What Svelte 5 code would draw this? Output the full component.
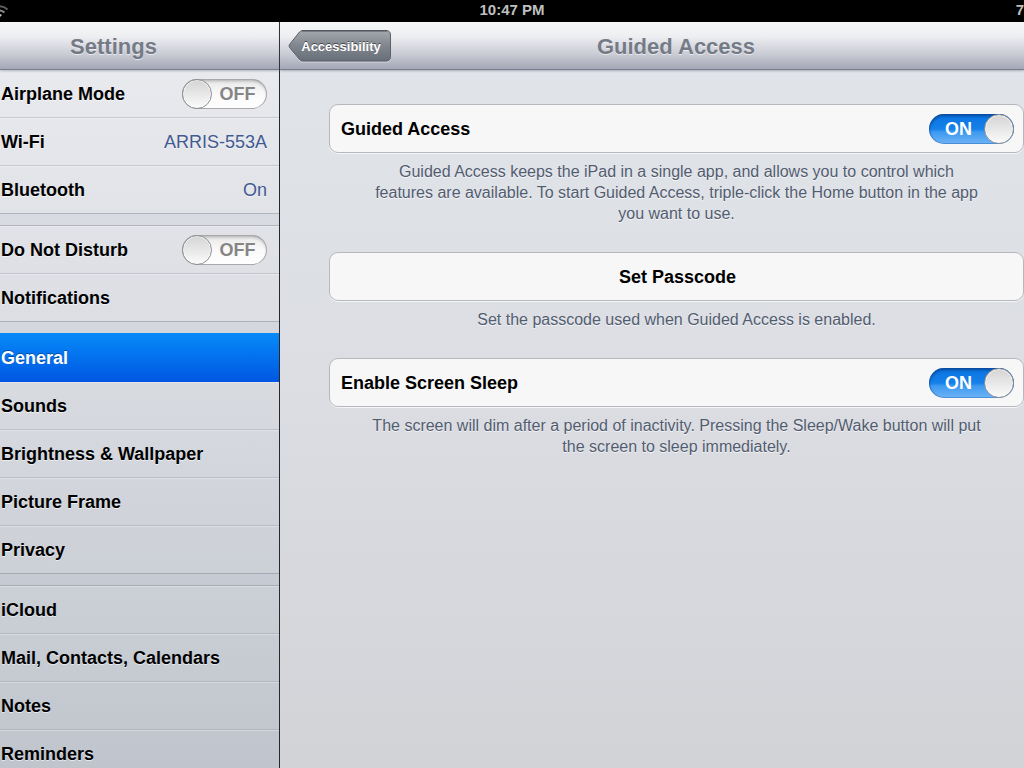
<script lang="ts">
  type Item = { id: string; label: string; value?: string; toggle?: boolean };

  let switches: Record<string, boolean> = $state({
    airplane: false,
    dnd: false,
    guided: true,
    sleep: true,
  });

  let selected = $state('general');

  const groups: Item[][] = [
    [
      { id: 'airplane', label: 'Airplane Mode', toggle: true },
      { id: 'wifi', label: 'Wi-Fi', value: 'ARRIS-553A' },
      { id: 'bluetooth', label: 'Bluetooth', value: 'On' },
    ],
    [
      { id: 'dnd', label: 'Do Not Disturb', toggle: true },
      { id: 'notifications', label: 'Notifications' },
    ],
    [
      { id: 'general', label: 'General' },
      { id: 'sounds', label: 'Sounds' },
      { id: 'brightness', label: 'Brightness & Wallpaper' },
      { id: 'frame', label: 'Picture Frame' },
      { id: 'privacy', label: 'Privacy' },
    ],
    [
      { id: 'icloud', label: 'iCloud' },
      { id: 'mail', label: 'Mail, Contacts, Calendars' },
      { id: 'notes', label: 'Notes' },
      { id: 'reminders', label: 'Reminders' },
    ],
  ];
</script>

{#snippet toggle(id: string)}
  <span class="switch" class:on={switches[id]}>
    <input type="checkbox" role="switch" {id} bind:checked={switches[id]} />
    <span class="switch-text" aria-hidden="true">{switches[id] ? 'ON' : 'OFF'}</span>
    <span class="knob"></span>
  </span>
{/snippet}

<div class="screen">
  <div class="status">
    <svg class="wifi" width="9" height="18" viewBox="0 0 9 18" aria-hidden="true">
      <g fill="none" stroke-width="2">
        <path d="M-9 7.5 A12 12 0 0 1 7.500 7.500" stroke="#5e5e5e" />
        <path d="M-6 10.500 A8 8 0 0 1 4.500 10.500" stroke="#8a8a8a" />
      </g>
      <path d="M-4 13 Q-1 10.500 2 13 L-1 16 Z" fill="#c4c4c4" />
    </svg>
    <span class="clock">10:47 PM</span>
    <span class="battery">7</span>
  </div>

  <div class="split">
    <aside class="sidebar">
      <header class="bar"><h1>Settings</h1></header>
      <nav class="list">
        {#each groups as group}
          <div class="group">
            {#each group as item (item.id)}
              {#if item.toggle}
                <div class="row">
                  <label for={item.id}>{item.label}</label>
                  {@render toggle(item.id)}
                </div>
              {:else}
                <a
                  class="row"
                  class:selected={selected === item.id}
                  href="#{item.id}"
                  onclick={() => (selected = item.id)}
                >
                  <span class="name">{item.label}</span>
                  {#if item.value}<span class="value">{item.value}</span>{/if}
                </a>
              {/if}
            {/each}
          </div>
        {/each}
      </nav>
    </aside>

    <main class="detail">
      <header class="bar">
        <h2>Guided Access</h2>
        <button class="back" type="button">
          <svg width="104" height="33" viewBox="0 0 104 33" aria-hidden="true">
            <defs>
              <linearGradient id="back-fill" x1="0" y1="0" x2="0" y2="1">
                <stop offset="0" stop-color="#a4a8ae" />
                <stop offset="0.5" stop-color="#81868e" />
                <stop offset="1" stop-color="#686e78" />
              </linearGradient>
            </defs>
            <path
              d="M15 1.5 H98 Q102.5 1.5 102.5 6 V27.5 Q102.5 32 98 32 H15 Q13 32 11.5 30.5 L1.5 18.5 Q0.5 17 1.5 15.5 L11.5 3 Q13 1.5 15 1.5 Z"
              fill="none"
              stroke="#fff"
              stroke-opacity="0.4"
            />
            <path
              d="M15 0.5 H98 Q102.5 0.5 102.5 5 V26.5 Q102.5 31 98 31 H15 Q13 31 11.5 29.5 L1.5 17.5 Q0.5 16 1.5 14.5 L11.5 2 Q13 0.5 15 0.5 Z"
              fill="url(#back-fill)"
              stroke="#5b6069"
            />
            <path d="M14 1 H99" stroke="#4c5057" />
          </svg>
          <span>Accessibility</span>
        </button>
      </header>

      <div class="content">
        <section>
          <div class="card">
            <label for="guided">Guided Access</label>
            {@render toggle('guided')}
          </div>
          <p>
            Guided Access keeps the iPad in a single app, and allows you to control which features
            are available. To start Guided Access, triple-click the Home button in the app you want
            to use.
          </p>
        </section>

        <section>
          <button class="card action" type="button">Set Passcode</button>
          <p>Set the passcode used when Guided Access is enabled.</p>
        </section>

        <section>
          <div class="card">
            <label for="sleep">Enable Screen Sleep</label>
            {@render toggle('sleep')}
          </div>
          <p>
            The screen will dim after a period of inactivity. Pressing the Sleep/Wake button will
            put the screen to sleep immediately.
          </p>
        </section>
      </div>
    </main>
  </div>
</div>

<style>
  :global(body) {
    margin: 0;
    background: #000;
  }

  .screen {
    display: flex;
    flex-direction: column;
    height: 100vh;
    overflow: hidden;
    font-family: 'Liberation Sans', Arial, sans-serif;
    color: #000;
  }

  .status {
    display: grid;
    grid-template-columns: 1fr auto 1fr;
    align-items: center;
    height: 22px;
    flex: none;
    background: #000;
    color: #bfbfbf;
    font-size: 15px;
    font-weight: bold;
    line-height: 19px;
  }

  .clock,
  .battery {
    padding-bottom: 3px;
  }

  .battery {
    justify-self: end;
  }

  .split {
    display: flex;
    flex: 1;
    min-height: 0;
  }

  .sidebar {
    display: flex;
    flex-direction: column;
    box-sizing: border-box;
    width: 280px;
    flex: none;
    border-right: 1px solid #26282c;
    background: linear-gradient(#ebecf0, #dcdee3 40%, #c0c5cd);
  }

  .bar {
    display: grid;
    align-items: center;
    box-sizing: border-box;
    height: 48px;
    padding-top: 2px;
    flex: none;
    background: linear-gradient(#f6f7f8, #eeeff2 30%, #cdcfd8 65%, #a4a7b6);
    border-bottom: 1px solid #7a7d90;
    box-shadow: 0 1px 2px rgba(90, 95, 115, 0.4);
    position: relative;
  }

  .bar > * {
    grid-area: 1 / 1;
  }

  h1,
  h2 {
    margin: 0;
    font-size: 22px;
    line-height: 28px;
    color: #757b86;
    text-align: center;
    text-shadow: 0 1px 0 rgba(255, 255, 255, 0.6);
  }

  h1 {
    padding-right: 52px;
  }

  h2 {
    padding-left: 48px;
  }

  .list {
    flex: 1;
    min-height: 0;
    overflow-y: auto;
    scrollbar-width: none;
  }

  .group + .group {
    margin-top: 11px;
    border-top: 1px solid rgba(120, 125, 138, 0.45);
    box-shadow: 0 -11px 0 rgba(165, 173, 195, 0.15);
  }

  .row {
    display: flex;
    align-items: center;
    justify-content: space-between;
    box-sizing: border-box;
    height: 48px;
    padding: 0 12px 0 1px;
    border-bottom: 1px solid rgba(140, 147, 160, 0.35);
    box-shadow: inset 0 1px 0 rgba(255, 255, 255, 0.3);
    color: #000;
    font-size: 18px;
    font-weight: bold;
    text-decoration: none;
    text-shadow: 0 1px 0 rgba(255, 255, 255, 0.6);
  }

  .row:last-child {
    border-bottom-color: rgba(120, 125, 138, 0.45);
  }

  label,
  .name,
  .value {
    padding-top: 2px;
  }

  .selected {
    position: relative;
    height: 49px;
    margin-top: -1px;
    background: linear-gradient(#078bf8, #0057e3);
    border-bottom-color: #0057e3;
    box-shadow: none;
    color: #fff;
    text-shadow: 0 -1px 0 rgba(0, 0, 0, 0.35);
  }

  .value {
    color: #415a91;
    font-weight: normal;
  }

  .detail {
    flex: 1;
    min-width: 0;
    background: linear-gradient(#e1e5ea, #dcdee3 45%, #d2d3d7);
  }

  .back {
    display: grid;
    align-items: center;
    justify-self: start;
    margin-left: 8px;
    padding: 0;
    border: 0;
    background: none;
    color: #fff;
    font: bold 13px/20px 'Liberation Sans', Arial, sans-serif;
    text-shadow: 0 -1px 0 rgba(0, 0, 0, 0.5);
    cursor: pointer;
  }

  .back > * {
    grid-area: 1 / 1;
  }

  .back span {
    padding: 0 10px 0 12px;
  }

  .content {
    padding: 34px 0 0 49px;
  }

  .card {
    display: flex;
    align-items: center;
    justify-content: space-between;
    box-sizing: border-box;
    width: 100%;
    height: 49px;
    padding: 0 9px 0 11px;
    border: 1px solid #b5b8bd;
    border-radius: 9px;
    background: #f7f7f7;
    box-shadow: 0 1px 0 rgba(255, 255, 255, 0.7);
    color: #000;
    font-size: 18px;
    font-weight: bold;
  }

  .action {
    justify-content: center;
    padding-top: 2px;
    font-family: inherit;
    cursor: pointer;
  }

  p {
    margin: 8px 0 28px;
    padding: 0 41px;
    color: #525c70;
    font-size: 16px;
    line-height: 21px;
    text-align: center;
    text-shadow: 0 1px 0 rgba(255, 255, 255, 0.7);
  }

  .switch {
    display: flex;
    align-items: center;
    flex-direction: row-reverse;
    position: relative;
    box-sizing: border-box;
    width: 85px;
    height: 30px;
    flex: none;
    border-radius: 15px;
    background: linear-gradient(#e6e6e6, #fafafa 50%, #fff);
    box-shadow:
      inset 0 0 0 1px #a9a9ab,
      inset 0 2px 3px rgba(0, 0, 0, 0.25);
    color: #858585;
    font-size: 18px;
    text-shadow: none;
  }

  .switch.on {
    flex-direction: row;
    background: linear-gradient(#0a74e0, #1580ea 50%, #3d99f0 60%, #6fb4f6);
    box-shadow:
      inset 0 0 0 1px rgba(20, 80, 160, 0.35),
      inset 0 2px 3px rgba(0, 30, 90, 0.5);
    color: #fff;
  }

  .switch input {
    position: absolute;
    inset: 0;
    width: 100%;
    height: 100%;
    margin: 0;
    opacity: 0;
    cursor: pointer;
  }

  .switch-text {
    flex: 1;
    padding: 2px 4px 0 0;
    text-align: center;
  }

  .on .switch-text {
    padding: 2px 0 0 4px;
  }

  .knob {
    box-sizing: border-box;
    width: 30px;
    height: 30px;
    flex: none;
    border: 1px solid #8f9093;
    border-radius: 50%;
    background: linear-gradient(#d4d4d4, #fbfbfb);
    box-shadow: inset 0 0 0 1px rgba(255, 255, 255, 0.6);
  }
</style>
